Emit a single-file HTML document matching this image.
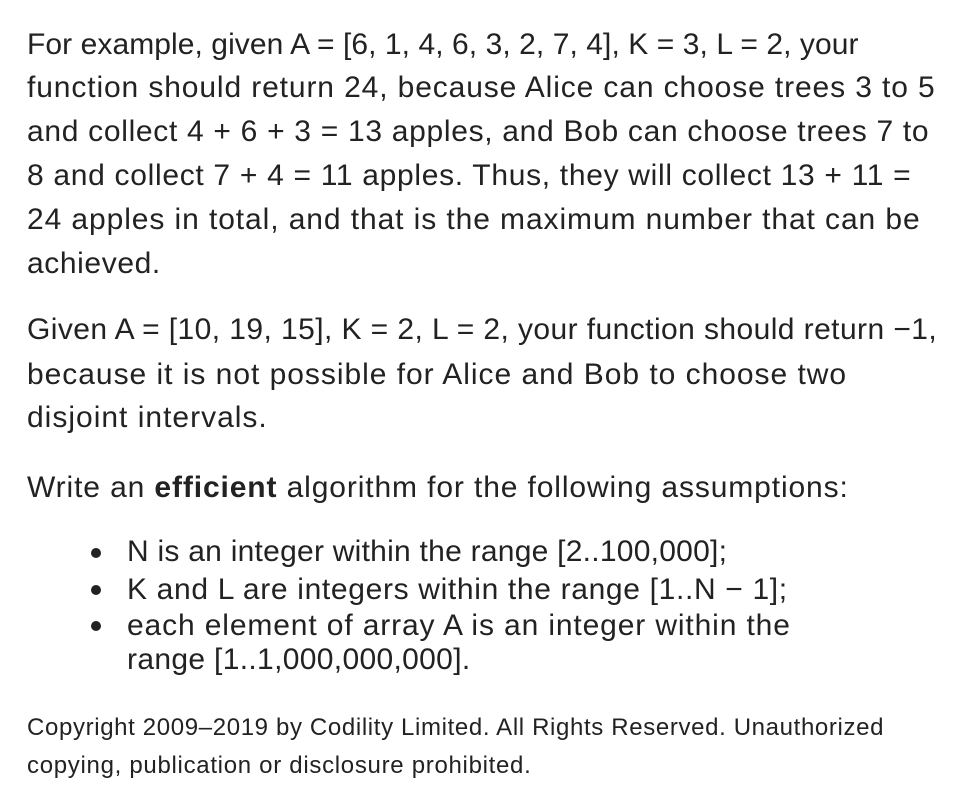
<!DOCTYPE html>
<html><head><meta charset="utf-8"><style>
body{margin:0;width:954px;height:798px;background:#fff;position:relative;overflow:hidden;font-family:"Liberation Sans",sans-serif;color:#222}
.l{position:absolute;left:27px;white-space:nowrap;font-size:30px;line-height:44px;height:44px;letter-spacing:0.15px}
.b{left:127px;letter-spacing:0.25px}
.dot{position:absolute;left:91px;width:10px;height:10px;border-radius:50%;background:#222}
.c{font-size:24px;letter-spacing:0.55px}
</style></head><body>
<div class="l" style="top:23px;letter-spacing:0.07px">For example, given A = [6, 1, 4, 6, 3, 2, 7, 4], K = 3, L = 2, your</div>
<div class="l" style="top:66px;letter-spacing:0.88px">function should return 24, because Alice can choose trees 3 to 5</div>
<div class="l" style="top:110px;letter-spacing:0.69px">and collect 4 + 6 + 3 = 13 apples, and Bob can choose trees 7 to</div>
<div class="l" style="top:154px;letter-spacing:0.69px">8 and collect 7 + 4 = 11 apples. Thus, they will collect 13 + 11 =</div>
<div class="l" style="top:198px;letter-spacing:0.91px">24 apples in total, and that is the maximum number that can be</div>
<div class="l" style="top:242px;letter-spacing:0.6px">achieved.</div>
<div class="l" style="top:308px;letter-spacing:0.42px">Given A = [10, 19, 15], K = 2, L = 2, your function should return −1,</div>
<div class="l" style="top:353px;letter-spacing:0.97px">because it is not possible for Alice and Bob to choose two</div>
<div class="l" style="top:396px;letter-spacing:1px">disjoint intervals.</div>
<div class="l" style="top:466px;letter-spacing:0.88px">Write an <b>efficient</b> algorithm for the following assumptions:</div>
<div class="dot" style="top:548px"></div>
<div class="l b" style="top:530px">N is an integer within the range [2..100,000];</div>
<div class="dot" style="top:585px"></div>
<div class="l b" style="top:568px;letter-spacing:0.66px">K and L are integers within the range [1..N − 1];</div>
<div class="dot" style="top:621px"></div>
<div class="l b" style="top:604px;letter-spacing:0.87px">each element of array A is an integer within the</div>
<div class="l b" style="top:638px;letter-spacing:0.33px">range [1..1,000,000,000].</div>
<div class="l c" style="top:706px;letter-spacing:0.64px">Copyright 2009–2019 by Codility Limited. All Rights Reserved. Unauthorized</div>
<div class="l c" style="top:744px;letter-spacing:0.7px">copying, publication or disclosure prohibited.</div>
</body></html>
